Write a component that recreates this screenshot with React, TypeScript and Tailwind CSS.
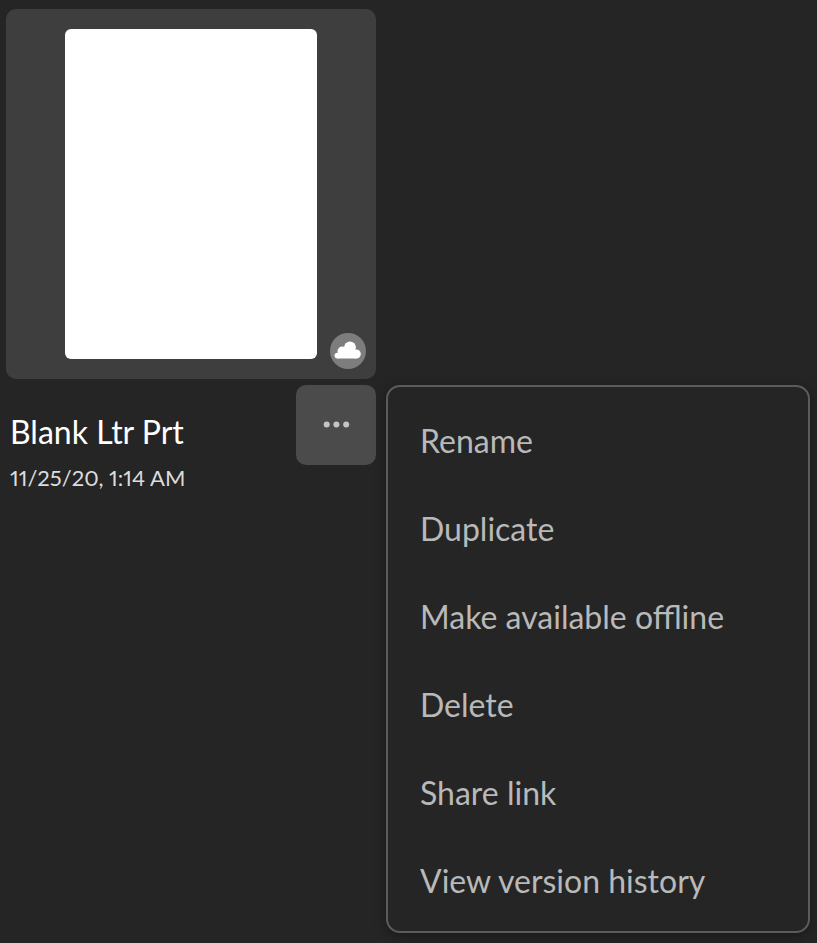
const menuItems = [
  "Rename",
  "Duplicate",
  "Make available offline",
  "Delete",
  "Share link",
  "View version history",
];

function CloudBadge() {
  return (
    <svg viewBox="0 0 36 36" className="h-9 w-9" role="img" aria-label="Cloud document">
      <circle cx="18" cy="18" r="18" fill="#7d7d7d" />
      <g fill="#fff">
        <circle cx="7.400" cy="22.600" r="2.900" />
        <circle cx="12.200" cy="18.300" r="4.700" />
        <circle cx="20" cy="14.500" r="5.900" />
        <circle cx="26.300" cy="21" r="4.500" />
        <path d="M7.400 20.500 12 16h10l4.300 3v6.500H7.400z" />
      </g>
    </svg>
  );
}

function DocumentCard() {
  return (
    <a
      href="#document"
      aria-label="Open Blank Ltr Prt"
      className="relative block w-[370px] rounded-[10px] bg-[#3e3e3e] py-5"
    >
      <div className="mx-auto h-[330px] w-[252px] rounded-md bg-white" />
      <div className="absolute right-[10px] bottom-[10px]">
        <CloudBadge />
      </div>
    </a>
  );
}

function DocumentInfo() {
  return (
    <div className="flex w-[370px] shrink-0 items-start justify-between">
      <div className="pt-6 pl-1">
        <h2 className="text-[32px] leading-[46px] text-white">Blank Ltr Prt</h2>
        <p className="text-[22px] leading-[46px] text-[#dcdcdc] proportional-nums">
          11/25/20, 1:14 AM
        </p>
      </div>
      <button
        type="button"
        aria-label="More options"
        aria-haspopup="menu"
        aria-expanded="true"
        className="flex h-20 w-20 items-center justify-center rounded-[10px] bg-[#4b4b4b]"
      >
        <svg viewBox="0 0 28 8" className="h-2 w-7" fill="#c4c4c4" aria-hidden="true">
          <circle cx="4.700" cy="3.600" r="3" />
          <circle cx="14.400" cy="3.600" r="3" />
          <circle cx="24.200" cy="3.600" r="3" />
        </svg>
      </button>
    </div>
  );
}

function OptionsMenu() {
  return (
    <div
      role="menu"
      className="flex grow flex-col rounded-[14px] border-2 border-[#5b5b5b] bg-[#252525] pt-[10px] pb-1.5 shadow-[0_2px_12px_rgba(0,0,0,0.35)]"
    >
      {menuItems.map((item) => (
        <button
          key={item}
          type="button"
          role="menuitem"
          className="h-[88px] px-8 text-left text-[32px] leading-10 text-[#b9b9b9]"
        >
          {item}
        </button>
      ))}
    </div>
  );
}

export default function App() {
  return (
    <main className="min-h-screen bg-[#252525] px-1.5 pt-[9px] pb-[10px] font-['Lato','Noto_Sans',sans-serif]">
      <DocumentCard />
      <div className="mt-1.5 flex items-start gap-[10px] pr-px">
        <DocumentInfo />
        <OptionsMenu />
      </div>
    </main>
  );
}
